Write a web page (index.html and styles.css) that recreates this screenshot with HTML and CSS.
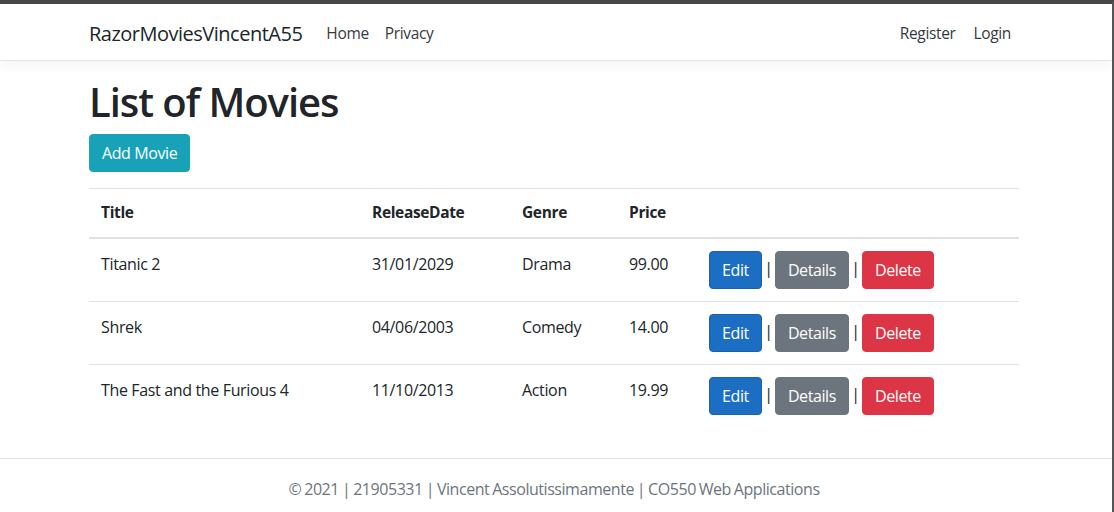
FILE: index.html
```html
<!DOCTYPE html>
<html lang="en">
<head>
<meta charset="utf-8">
<title>List of Movies - RazorMoviesVincentA55</title>
<link rel="stylesheet" href="styles.css">
</head>
<body>
<div class="frame">
  <header class="navbar">
    <div class="container nav-inner">
      <a class="brand" href="#">RazorMoviesVincentA55</a>
      <ul class="nav nav-left">
        <li><a href="#">Home</a></li>
        <li><a href="#">Privacy</a></li>
      </ul>
      <ul class="nav nav-right">
        <li><a href="#">Register</a></li>
        <li><a href="#">Login</a></li>
      </ul>
    </div>
  </header>
  <main class="container main">
    <h1 class="title">List of Movies</h1>
    <p class="actions-top"><a class="btn btn-info" href="#">Add Movie</a></p>
    <table class="table">
      <thead>
        <tr>
          <th class="c-title">Title</th>
          <th class="c-date">ReleaseDate</th>
          <th class="c-genre">Genre</th>
          <th class="c-price">Price</th>
          <th class="c-act"></th>
        </tr>
      </thead>
      <tbody>
        <tr>
          <td>Titanic 2</td>
          <td>31/01/2029</td>
          <td>Drama</td>
          <td>99.00</td>
          <td class="act"><a class="btn btn-primary" href="#">Edit</a> | <a class="btn btn-secondary" href="#">Details</a> | <a class="btn btn-danger" href="#">Delete</a></td>
        </tr>
        <tr>
          <td>Shrek</td>
          <td>04/06/2003</td>
          <td>Comedy</td>
          <td>14.00</td>
          <td class="act"><a class="btn btn-primary" href="#">Edit</a> | <a class="btn btn-secondary" href="#">Details</a> | <a class="btn btn-danger" href="#">Delete</a></td>
        </tr>
        <tr>
          <td>The Fast and the Furious 4</td>
          <td>11/10/2013</td>
          <td>Action</td>
          <td>19.99</td>
          <td class="act"><a class="btn btn-primary" href="#">Edit</a> | <a class="btn btn-secondary" href="#">Details</a> | <a class="btn btn-danger" href="#">Delete</a></td>
        </tr>
      </tbody>
    </table>
  </main>
  <footer class="footer">
    <div class="container footer-inner">&copy; 2021 | 21905331 | Vincent Assolutissimamente | CO550 Web Applications</div>
  </footer>
</div>
</body>
</html>
```
FILE: styles.css
```css
html, body {
  margin: 0;
  padding: 0;
  background: #fff;
}
body {
  font-family: "Open Sans", "Noto Sans", "Liberation Sans", sans-serif;
  font-size: 16px;
  line-height: 1.5;
  color: #212529;
}
.frame {
  width: 1112px;
  height: 508px;
  border-top: 4px solid #464646;
  border-right: 2px solid #555;
  overflow: hidden;
  display: flex;
  flex-direction: column;
}
.container {
  width: 930px;
  margin-left: 89px;
}
.navbar {
  height: 56px;
  border-bottom: 1px solid #e5e5e5;
  box-shadow: 0 4px 12px rgba(0,0,0,0.05);
  display: flex;
  align-items: center;
  flex-shrink: 0;
}
.nav-inner {
  display: flex;
  align-items: center;
  padding-top: 3px;
}
.brand {
  font-size: 20px;
  line-height: 30px;
  color: #212529;
  text-decoration: none;
  margin-right: 16px;
  letter-spacing: -0.5px;
}
.nav {
  list-style: none;
  margin: 0;
  padding: 0;
  display: flex;
}
.nav a {
  display: block;
  padding: 8px 8px;
  color: #343a40;
  text-decoration: none;
  font-size: 15.5px;
  letter-spacing: -0.35px;
}
.nav-right {
  margin-left: auto;
}
.nav-right li:first-child a {
  padding-right: 10px;
}
.main {
  padding-top: 17px;
}
.title {
  font-size: 40px;
  font-weight: 600;
  line-height: 48px;
  margin: 0 0 8px;
  letter-spacing: -1.05px;
}
.actions-top {
  margin: 0 0 16px;
}
.btn {
  display: inline-block;
  font-size: 16px;
  line-height: 24px;
  padding: 6px 12px;
  border: 1px solid transparent;
  border-radius: 4px;
  color: #fff;
  text-decoration: none;
  vertical-align: middle;
  letter-spacing: -0.4px;
}
.btn-info { background: #17a2b8; border-color: #17a2b8; }
.btn-primary { background: #1b6ec2; border-color: #1861ac; }
.btn-secondary { background: #6c757d; border-color: #6c757d; }
.btn-danger { background: #dc3545; border-color: #dc3545; }
.table {
  width: 930px;
  border-collapse: collapse;
  margin-bottom: 31px;
  letter-spacing: -0.35px;
}
.table th, .table td {
  padding: 12px;
  border-top: 1px solid #dee2e6;
  text-align: left;
  vertical-align: top;
}
.table td {
  padding-top: 13px;
  padding-bottom: 11px;
}
.table td.act {
  padding-top: 12px;
  padding-bottom: 12px;
  word-spacing: -1.5px;
  color: #212529;
}
.table td.act .btn {
  word-spacing: 0;
}
.table thead th {
  border-bottom: 2px solid #dee2e6;
  font-weight: 700;
  font-size: 15.5px;
  padding-bottom: 13px;
}
.c-title { width: 247px; }
.c-date { width: 126px; }
.c-genre { width: 83px; }
.c-price { width: 56px; }
.footer {
  border-top: 1px solid #dee2e6;
  color: #6c757d;
  flex-grow: 1;
}
.footer-inner {
  line-height: 60px;
  text-align: center;
  white-space: nowrap;
  letter-spacing: -0.45px;
  word-spacing: -0.8px;
}
```
